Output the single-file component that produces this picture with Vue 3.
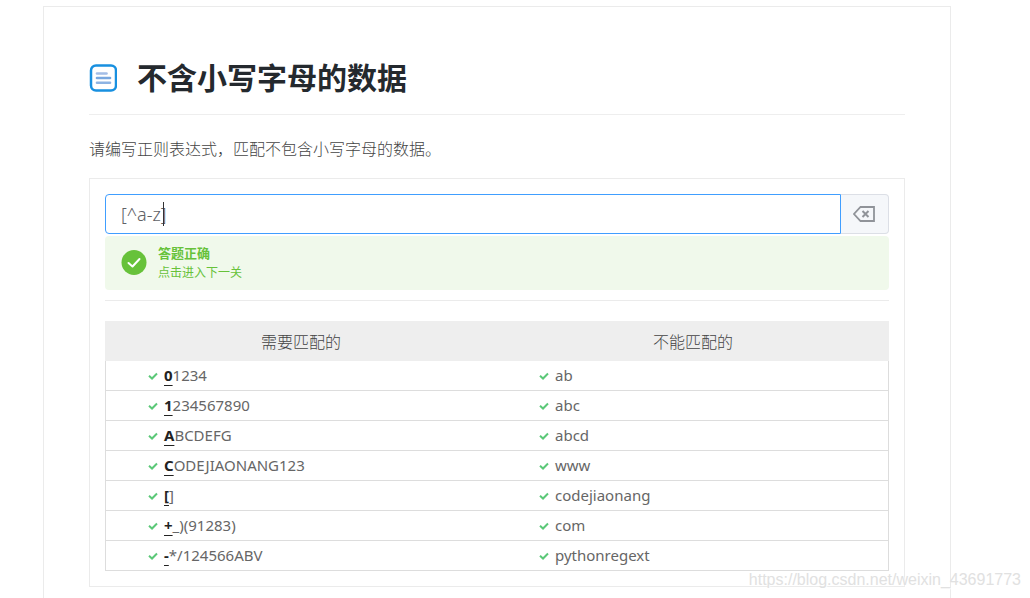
<script setup>
import { ref } from 'vue'

const pattern = ref('[^a-z]')
const rows = [
  { hit: '0', rest: '1234', avoid: 'ab' },
  { hit: '1', rest: '234567890', avoid: 'abc' },
  { hit: 'A', rest: 'BCDEFG', avoid: 'abcd' },
  { hit: 'C', rest: 'ODEJIAONANG123', avoid: 'www' },
  { hit: '[', rest: ']', avoid: 'codejiaonang' },
  { hit: '+', rest: '_)(91283)', avoid: 'com' },
  { hit: '-', rest: '*/124566ABV', avoid: 'pythonregext' }
]
</script>

<template>
  <main class="card">
    <header class="heading">
      <svg class="doc" viewBox="0 0 28 28" aria-hidden="true">
        <rect x="2" y="1.500" width="25" height="25" rx="5" fill="#fff" stroke="#1890e0" stroke-width="2.500" />
        <g stroke-linecap="round" stroke-width="2.600">
          <path d="M8 9.500h9.500" stroke="#a3bde6" />
          <path d="M8 14h13" stroke="#78a7df" />
          <path d="M8 18.800h13" stroke="#8db3e3" />
        </g>
      </svg>
      <h1>不含小写字母的数据</h1>
    </header>
    <p class="intro"><label for="pattern">请编写正则表达式，匹配不包含小写字母的数据。</label></p>

    <section class="panel">
      <div class="entry">
        <div class="field">
          <input id="pattern" v-model="pattern" type="text" spellcheck="false" />
          <span class="caret"></span>
        </div>
        <button type="button" aria-label="清空" @click="pattern = ''">
          <svg viewBox="0 0 24 18" aria-hidden="true" fill="none" stroke="#909399">
            <path d="M7.500 2H21v14H7.500L1 9z" stroke-width="1.800" />
            <path d="M9.500 6l6 6M15.500 6l-6 6" stroke-width="2" />
          </svg>
        </button>
      </div>

      <div class="alert" role="status">
        <svg viewBox="0 0 26 26" aria-hidden="true">
          <circle cx="13" cy="12.500" r="12.500" fill="#67c23a" />
          <path d="M7.500 13l4 3.500 7-7.500" fill="none" stroke="#fff" stroke-width="2" stroke-linecap="round" stroke-linejoin="round" />
        </svg>
        <div>
          <strong>答题正确</strong>
          <a href="#">点击进入下一关</a>
        </div>
      </div>

      <hr />

      <table>
        <thead>
          <tr>
            <th scope="col">需要匹配的</th>
            <th scope="col">不能匹配的</th>
          </tr>
        </thead>
        <tbody>
          <tr v-for="row in rows" :key="row.avoid">
            <td>
              <svg class="tick" viewBox="0 0 10 8" aria-hidden="true"><path d="M1 3.800l3 2.700 5-5" /></svg><b>{{ row.hit }}</b>{{ row.rest }}
            </td>
            <td>
              <svg class="tick" viewBox="0 0 10 8" aria-hidden="true"><path d="M1 3.800l3 2.700 5-5" /></svg>{{ row.avoid }}
            </td>
          </tr>
        </tbody>
      </table>
    </section>
  </main>
  <div class="watermark">https://blog.csdn.net/weixin_43691773</div>
</template>

<style>
body {
  background: #fff;
}
#app {
  position: relative;
  display: flow-root;
}
</style>

<style scoped>
.card,
.card input {
  font-family: "Noto Sans", "Noto Sans CJK SC", sans-serif;
}
.card {
  box-sizing: border-box;
  min-height: calc(100vh - 6px);
  margin: 6px 79px 0 43px;
  padding: 48px 45px 11px;
  border: 1px solid #ebebeb;
  border-bottom: 0;
  color: #444;
  font-size: 16px;
  font-weight: 300;
}
.heading {
  display: flex;
  align-items: center;
  gap: 20px;
  height: 59px;
  border-bottom: 1px solid #eee;
}
.doc {
  width: 28px;
  height: 28px;
  margin-bottom: 14px;
}
h1 {
  margin: 0 0 14px;
  color: #24292e;
  font-size: 30px;
  font-weight: 700;
  line-height: 44px;
}
.intro {
  margin: 22px 0 16px;
  line-height: 25px;
}
.panel {
  padding: 15px;
  border: 1px solid #ebebeb;
}
.entry {
  display: flex;
  height: 40px;
}
.field {
  position: relative;
  flex: 1;
}
input {
  box-sizing: border-box;
  width: 100%;
  height: 40px;
  padding: 0 15px;
  border: 1px solid #409eff;
  border-radius: 4px 0 0 4px;
  outline: 0;
  color: #606266;
  font-size: 18px;
  font-weight: 300;
}
.caret {
  position: absolute;
  top: 8px;
  left: 58px;
  width: 1px;
  height: 24px;
  background: #333;
}
button {
  display: flex;
  align-items: center;
  justify-content: center;
  width: 48px;
  padding: 0;
  border: 1px solid #dcdfe6;
  border-left: 0;
  border-radius: 0 4px 4px 0;
  background: #f5f7fa;
}
button svg {
  width: 24px;
  height: 18px;
}
.alert {
  display: flex;
  align-items: center;
  gap: 11px;
  height: 54px;
  margin-top: 2px;
  padding: 0 16px;
  border-radius: 4px;
  background: #f0f9eb;
  color: #67c23a;
}
.alert > svg {
  width: 26px;
  height: 26px;
}
.alert strong,
.alert a {
  display: block;
  color: inherit;
  font-size: 13px;
  font-weight: 700;
  line-height: 19px;
  text-decoration: none;
}
.alert a {
  font-size: 12px;
  font-weight: 400;
}
hr {
  margin: 10px 0 20px;
  border: 0;
  border-top: 1px solid #ebebeb;
}
table {
  width: 100%;
  table-layout: fixed;
  border-spacing: 0;
}
th {
  height: 40px;
  padding: 0;
  box-sizing: border-box;
  background: #eee;
  font-weight: 300;
}
td {
  box-sizing: border-box;
  height: 30px;
  padding: 0 0 0 42px;
  border-bottom: 1px solid #ddd;
  color: #666;
  font-size: 15px;
  font-weight: 400;
  line-height: 29px;
}
td:first-child {
  border-left: 1px solid #ddd;
}
td:last-child {
  border-right: 1px solid #ddd;
}
td b {
  color: #222;
  font-weight: 700;
  text-decoration: underline;
  text-underline-offset: 4px;
  text-decoration-thickness: 1px;
}
.tick {
  width: 10px;
  height: 8px;
  margin-right: 6px;
  vertical-align: 1px;
}
.tick path {
  fill: none;
  stroke: #5bc878;
  stroke-width: 2;
}
.watermark {
  position: absolute;
  right: 9px;
  bottom: 8px;
  color: #e1e1e1;
  font: 16px/20px "Liberation Sans", Arial, sans-serif;
  text-shadow: 1px 1px 1px #fff;
}
</style>
